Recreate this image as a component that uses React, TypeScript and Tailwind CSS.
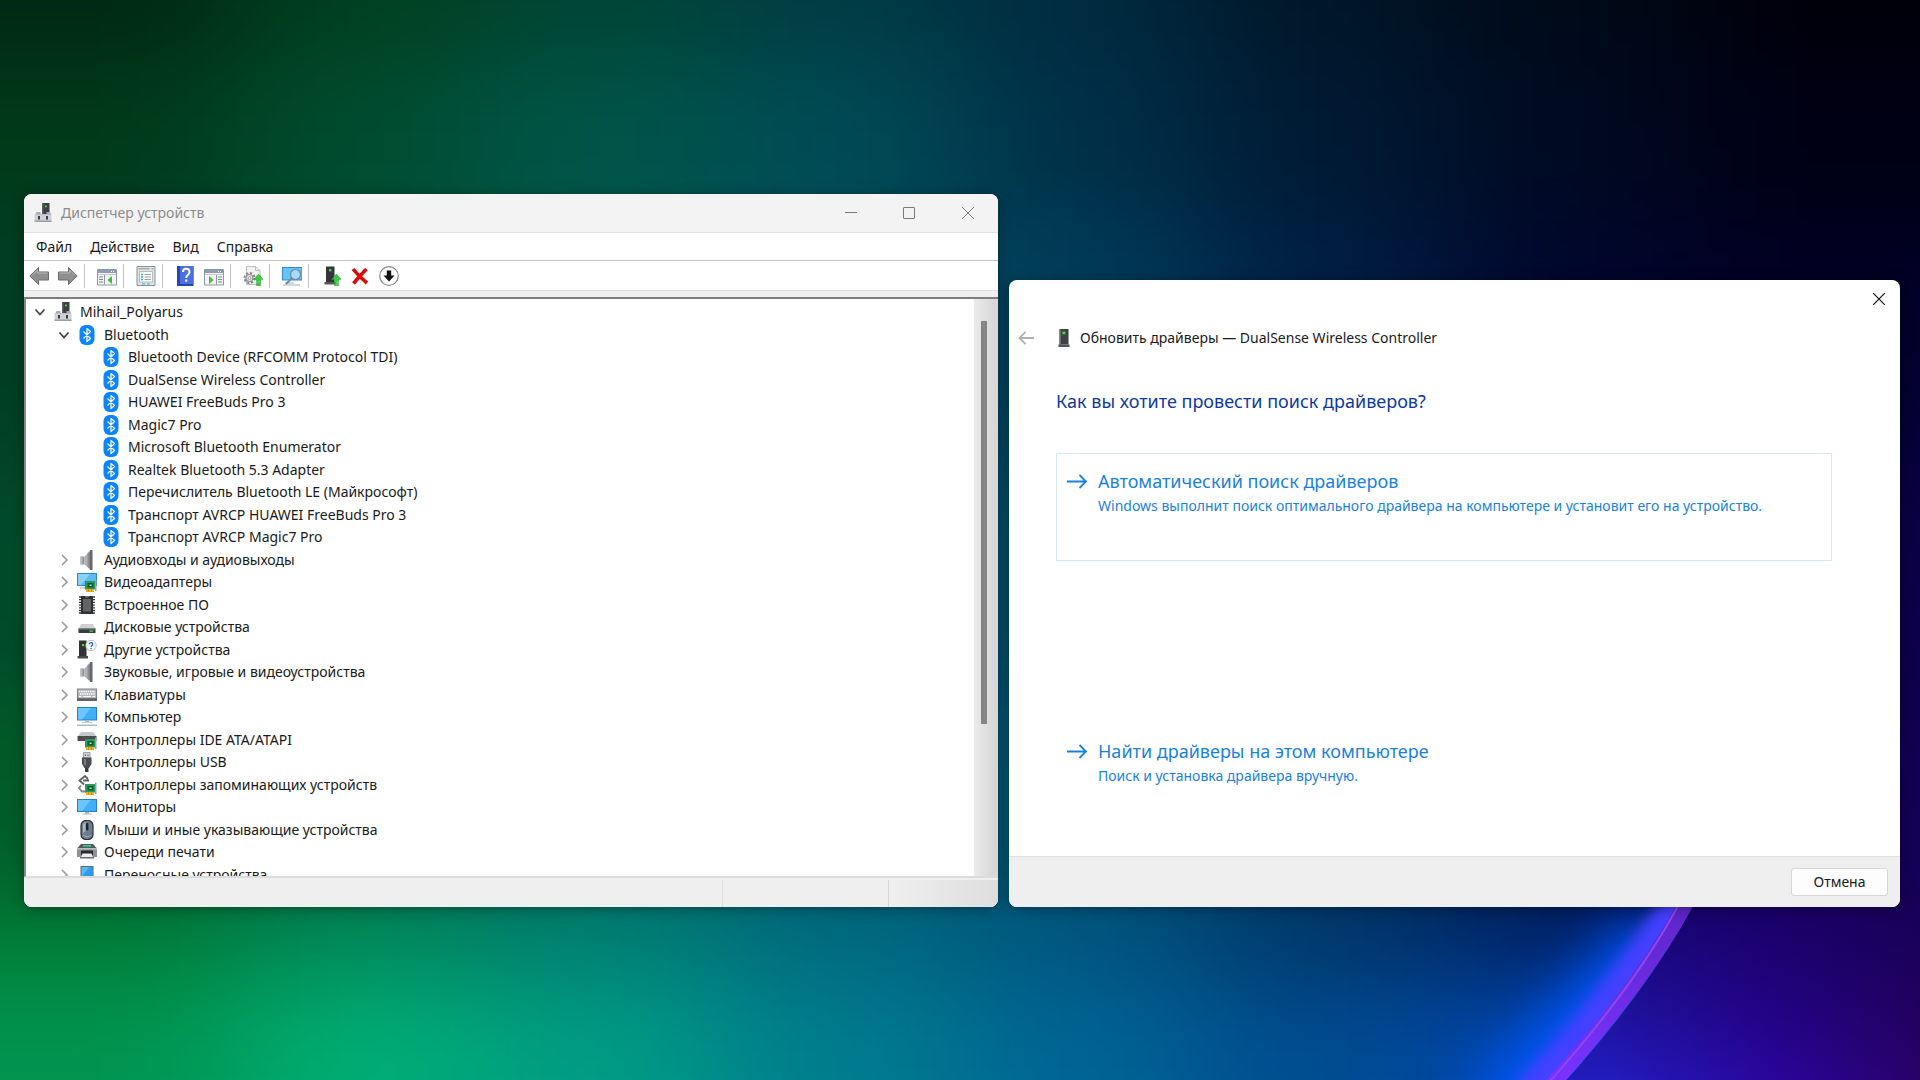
import React from 'react';

type IconName =
  | 'computerRoot'
  | 'bluetooth'
  | 'speaker'
  | 'display'
  | 'chip'
  | 'disk'
  | 'unknown'
  | 'keyboard'
  | 'computer'
  | 'ide'
  | 'usb'
  | 'storage'
  | 'monitor'
  | 'mouse'
  | 'printer'
  | 'portable';

type Node = { label: string; icon: IconName; depth: 0 | 1 | 2; open?: boolean };

const nodes: Node[] = [
  { label: 'Mihail_Polyarus', icon: 'computerRoot', depth: 0, open: true },
  { label: 'Bluetooth', icon: 'bluetooth', depth: 1, open: true },
  { label: 'Bluetooth Device (RFCOMM Protocol TDI)', icon: 'bluetooth', depth: 2 },
  { label: 'DualSense Wireless Controller', icon: 'bluetooth', depth: 2 },
  { label: 'HUAWEI FreeBuds Pro 3', icon: 'bluetooth', depth: 2 },
  { label: 'Magic7 Pro', icon: 'bluetooth', depth: 2 },
  { label: 'Microsoft Bluetooth Enumerator', icon: 'bluetooth', depth: 2 },
  { label: 'Realtek Bluetooth 5.3 Adapter', icon: 'bluetooth', depth: 2 },
  { label: 'Перечислитель Bluetooth LE (Майкрософт)', icon: 'bluetooth', depth: 2 },
  { label: 'Транспорт AVRCP HUAWEI FreeBuds Pro 3', icon: 'bluetooth', depth: 2 },
  { label: 'Транспорт AVRCP Magic7 Pro', icon: 'bluetooth', depth: 2 },
  { label: 'Аудиовходы и аудиовыходы', icon: 'speaker', depth: 1 },
  { label: 'Видеоадаптеры', icon: 'display', depth: 1 },
  { label: 'Встроенное ПО', icon: 'chip', depth: 1 },
  { label: 'Дисковые устройства', icon: 'disk', depth: 1 },
  { label: 'Другие устройства', icon: 'unknown', depth: 1 },
  { label: 'Звуковые, игровые и видеоустройства', icon: 'speaker', depth: 1 },
  { label: 'Клавиатуры', icon: 'keyboard', depth: 1 },
  { label: 'Компьютер', icon: 'computer', depth: 1 },
  { label: 'Контроллеры IDE ATA/ATAPI', icon: 'ide', depth: 1 },
  { label: 'Контроллеры USB', icon: 'usb', depth: 1 },
  { label: 'Контроллеры запоминающих устройств', icon: 'storage', depth: 1 },
  { label: 'Мониторы', icon: 'monitor', depth: 1 },
  { label: 'Мыши и иные указывающие устройства', icon: 'mouse', depth: 1 },
  { label: 'Очереди печати', icon: 'printer', depth: 1 },
  { label: 'Переносные устройства', icon: 'portable', depth: 1 },
];

const indent = { 0: 'pl-[5px]', 1: 'pl-[29px]', 2: 'pl-[53px]' };

// Green expansion card with gold pins, shared by the adapter icons
const Card = () => (
  <g>
    <path d="M8 9h10v8.500h-10z" fill="#2a9a5a" />
    <path d="M18 7.500h1.500v11.500h-1.500z" fill="#9aa3a8" />
    <path d="M10.500 11h6v4.500h-6z" fill="#0b5a30" />
    <path d="M12.500 12.500h2v1.500h-2z" fill="#a5f0c2" />
    <path d="M9 17h8v3H9z" fill="#f5ad1e" />
    <path d="M11.500 17v3M14.500 17v3" stroke="#b87908" strokeWidth=".6" />
  </g>
);

const glyphs: Record<IconName, React.ReactNode> = {
  computerRoot: (
    <>
      <path d="M9 0h7.500v11H9z" fill="#3d3f42" />
      <path d="M9 0h1.500v11H9z" fill="#5c5f63" />
      <rect x="12" y="2.500" width="1.800" height="1.800" fill="#3dea3d" />
      <path d="M3.500 9h4v2h6V9h3.500l1.500 3H2z" fill="#a9abb0" />
      <path d="M1.500 11.500h17V19h-17z" fill="#cfd1d6" />
      <path d="M1.500 17.500h17V19h-17z" fill="#9d9fa6" />
      <path d="M5 13h2v3.500H5zM13 13h2v3.500h-2z" fill="#3b3d42" />
    </>
  ),
  bluetooth: (
    <>
      <rect x="2.500" y="0" width="15" height="20" rx="6" fill="#0a84ff" />
      <path d="M6.500 6.500l7 7L10 16.500V3.500l3.500 3-7 7" fill="none" stroke="#fff" strokeWidth="1.200" strokeLinejoin="round" />
    </>
  ),
  speaker: (
    <>
      <path d="M3.500 6.500h4v8h-4z" fill="#8d9095" />
      <path d="M3.500 6.500h2v8h-2z" fill="#b9bcc0" />
      <path d="M7.500 6.500L13 1v18l-5.500-4.500z" fill="#b0b3b8" />
      <path d="M10.500 3.500L13 1v18l-2.500-2z" fill="#888b90" />
      <path d="M13 0h2.500v20H13z" fill="#62666b" />
    </>
  ),
  display: (
    <>
      <path d="M0 1h20v13H0z" fill="#2f86c6" />
      <path d="M1 2h18v11H1z" fill="#5cbcf2" />
      <path d="M1 2h12L4 13H1z" fill="#86d2fa" />
      <path d="M3 15.500h6v1H3z" fill="#a3abb3" />
      <Card />
    </>
  ),
  chip: (
    <>
      <path d="M2 2h16M2 4.700h16M2 7.400h16M2 10.100h16M2 12.800h16M2 15.500h16M2 18h16" stroke="#3a3a3a" strokeWidth="1.300" />
      <path d="M4 1h3.500a2.500 2 0 0 0 5 0H16v18H4z" fill="#2e2f31" />
      <path d="M6 4h8v12.500H6z" fill="#626467" />
    </>
  ),
  disk: (
    <>
      <path d="M4 7h12l2.500 5h-17z" fill="#cfd1d3" />
      <path d="M1.500 11.500h17V16h-17z" fill="#3a3c3f" />
      <path d="M1.500 11.500h17v1h-17z" fill="#77797c" />
      <rect x="12.500" y="13.300" width="3.500" height="1.500" fill="#35d24c" />
    </>
  ),
  unknown: (
    <>
      <path d="M2 .500h7.500V16H2z" fill="#313336" />
      <path d="M.5 16h10.500v2.500H.5z" fill="#47494c" />
      <rect x="5" y="4" width="2.200" height="2.200" fill="#35e046" />
      <circle cx="14" cy="5.500" r="5.200" fill="#f6f7f8" stroke="#aab0b6" strokeWidth=".8" />
      <path d="M12.300 4.200c0-2.200 3.500-2.200 3.500 0 0 1.300-1.700 1.300-1.700 2.700M14.100 8v1.200" fill="none" stroke="#1d6fc4" strokeWidth="1.300" />
    </>
  ),
  keyboard: (
    <>
      <path d="M0 3.500h20v12.500H0z" fill="#7f8388" />
      <path d="M1 4.500h18v8.500H1z" fill="#b6babf" />
      <path d="M2 6.500h16M3 9h15" stroke="#fff" strokeWidth="1.300" strokeDasharray="1.400 .8" />
      <path d="M2 11.500h2.500M6 11.500h8M15.500 11.500h2.500" stroke="#fff" strokeWidth="1.200" />
      <path d="M0 13.500h20V16H0z" fill="#5f6368" />
    </>
  ),
  computer: (
    <>
      <path d="M0 0h20v13.500H0z" fill="#2a7fc0" />
      <path d="M1 1h18v11.500H1z" fill="#3fb0f5" />
      <path d="M1 1h13L5 12.500H1z" fill="#6cc6fa" />
      <path d="M8 13.500h4V15H8z" fill="#a9bccb" />
      <path d="M5 15h10v1H5z" fill="#c3ced8" />
      <path d="M0 17.500h20V19H0z" fill="#a9bccb" />
    </>
  ),
  ide: (
    <>
      <path d="M4 2h12l3.500 4.500H.5z" fill="#c6c8ca" />
      <path d="M.5 6h19v5H.5z" fill="#4a4c4f" />
      <Card />
    </>
  ),
  usb: (
    <>
      <path d="M6.500.500h6.500V6H6.500z" fill="#d5d7da" stroke="#8c8f93" strokeWidth=".8" />
      <path d="M8 2.500h1v1.500H8zM10.500 2.500h1v1.500h-1z" fill="#55585b" />
      <path d="M5 5.500h9.500V12l-2.500 4H7.500L5 12z" fill="#4b4d50" />
      <path d="M7 7h2v6H7z" fill="#7a7c7f" />
      <path d="M8 16h3.500v4H8z" fill="#3a3c3e" />
    </>
  ),
  storage: (
    <>
      <path d="M11 4L8 1 2.500 5.500 7 9.500M6 5.500h6" fill="none" stroke="#5b5e61" strokeWidth="1.800" />
      <path d="M4 10.500L2 13l3 3.500h4" fill="none" stroke="#808386" strokeWidth="1.800" />
      <Card />
    </>
  ),
  monitor: (
    <>
      <path d="M0 2h20v13H0z" fill="#2a7fc0" />
      <path d="M1 3h18v11H1z" fill="#3fb0f5" />
      <path d="M1 3h13L5 14H1z" fill="#6cc6fa" />
      <path d="M8 15h4v1.500H8zM5.500 16.500h9v1h-9z" fill="#a9bccb" />
    </>
  ),
  mouse: (
    <>
      <rect x="4" y=".5" width="12" height="19" rx="5" fill="#6d7d8e" stroke="#2b2f34" strokeWidth="1.200" />
      <path d="M6 5.500C6 3 7.500 2 8.500 2v9L6 13z" fill="#a7b6c5" />
      <rect x="9" y="3" width="2.400" height="7.500" rx="1" fill="#1f2226" />
      <path d="M6 15c2 2 6 2 8 0" fill="none" stroke="#9aabbc" />
    </>
  ),
  printer: (
    <>
      <path d="M4 2h12l3.500 4H.5z" fill="#54575a" />
      <path d="M6 3h8v1.700H6z" fill="#29cf8a" />
      <path d="M0 6h20v9H0z" fill="#8e9296" />
      <path d="M0 6h20v1.500H0z" fill="#b9bcc0" />
      <path d="M4 8.500h12v5H4z" fill="#26282a" />
      <path d="M5.500 11.500h9l1.500 4H4z" fill="#eceef0" />
      <path d="M3 15h14v1.500H3z" fill="#686b6f" />
    </>
  ),
  portable: (
    <>
      <path d="M3.500 1h13v19h-13z" fill="#5f666d" />
      <path d="M4.500 2h11v15h-11z" fill="#2c9cf0" />
      <path d="M4.500 2h8l-8 10z" fill="#58b6f8" />
    </>
  ),
};

function DeviceIcon({ name }: { name: IconName }) {
  return (
    <svg viewBox="0 0 20 20" className="h-5 w-[22px] shrink-0" aria-hidden="true">
      {glyphs[name]}
    </svg>
  );
}

function Chevron({ open }: { open?: boolean }) {
  return (
    <svg viewBox="0 0 18 18" className="h-[18px] w-[18px]" fill="none" aria-hidden="true">
      {open ? (
        <path d="M4.500 6.500L9 11.500l4.500-5" stroke="#404040" strokeWidth="1.700" />
      ) : (
        <path d="M7 4l5 5-5 5" stroke="#9b9b9b" strokeWidth="1.600" />
      )}
    </svg>
  );
}

const ArrowUpGreen = () => (
  <path d="M15.500 8l5 5.500h-2.800v2h-4.400v-2h-2.800zM13.300 16.500h4.400v1.200h-4.400zM13.300 18.600h4.400v1.200h-4.400z" fill="#3ac93f" stroke="#1d9a28" strokeWidth=".4" />
);

const PaneWindow = ({ flip }: { flip?: boolean }) => (
  <>
    <path d="M.5 3.500h19v15.500H.5z" fill="#f4f4f4" stroke="#8d97a3" />
    <path d="M1 4h18v3H1z" fill="#8f9db0" />
    <path d="M14 5.500h1M16 5.500h1" stroke="#fff" />
    <path d="M1 8.500h18" stroke="#c4c9d0" />
    {flip ? (
      <>
        <path d="M12.500 9v9.500" stroke="#8d97a3" />
        <path d="M14 11h4M14 13.500h4M14 16h4" stroke="#7d8692" strokeWidth="1.200" />
        <path d="M5 10l4.500 4L5 18z" fill="#3bbf30" />
      </>
    ) : (
      <>
        <path d="M7.500 9v9.500" stroke="#8d97a3" />
        <path d="M2 11h4M2 13.500h4M2 16h4" stroke="#7d8692" strokeWidth="1.200" />
        <path d="M15 10l-4.500 4 4.500 4z" fill="#3bbf30" />
      </>
    )}
  </>
);

const toolGroups: { label: string; art: React.ReactNode }[][] = [
  [
    {
      label: 'Назад',
      art: (
        <>
          <path d="M.8 10L9.500 1.500V6h10v8h-10v4.500z" fill="#8f8f8f" stroke="#6b6b6b" />
          <path d="M3 9.500L8.500 4v3h10" fill="none" stroke="#b9b9b9" />
        </>
      ),
    },
    {
      label: 'Вперёд',
      art: (
        <>
          <path d="M19.200 10L10.500 1.500V6H.5v8h10v4.500z" fill="#8f8f8f" stroke="#6b6b6b" />
          <path d="M17 9.500L11.500 4v3h-10" fill="none" stroke="#b9b9b9" />
        </>
      ),
    },
  ],
  [{ label: 'Дерево консоли', art: <PaneWindow /> }],
  [
    {
      label: 'Свойства',
      art: (
        <>
          <path d="M1 .500h18V19.500H1z" fill="#e1e4e7" stroke="#8b9096" />
          <path d="M2.500 2.800h11M15.500 2.800h2" stroke="#8b9096" />
          <path d="M3.500 5.500h13v10.500h-13z" fill="#fff" stroke="#a5abb2" strokeWidth=".8" />
          <path d="M5 8.500h2M5 11h2M5 13.500h2" stroke="#37a3e6" strokeWidth="1.300" />
          <path d="M8.500 8.500h6.500M8.500 11h6.500M8.500 13.500h6.500" stroke="#9aa0a6" />
          <path d="M6 17.800h3M11 17.800h3" stroke="#41c0ee" strokeWidth="1.200" />
        </>
      ),
    },
  ],
  [
    {
      label: 'Справка',
      art: (
        <>
          <path d="M2 0h16.500v20H2z" fill="#2447b5" />
          <path d="M5 0h13.500v18H5z" fill="#4a6fe0" />
          <path d="M8 6c0-4.500 6.500-4.500 6.500 0 0 3-3.300 2.500-3.300 6M11.200 13.500v2.200" fill="none" stroke="#fff" strokeWidth="2" />
        </>
      ),
    },
    { label: 'Панель действий', art: <PaneWindow flip /> },
  ],
  [
    {
      label: 'Обновить конфигурацию',
      art: (
        <>
          <path d="M3.500.500h9l4.500 4V18.500h-13.500z" fill="#f3f3f3" stroke="#bcbcbc" />
          <path d="M12.500.500v4H17" fill="none" stroke="#bcbcbc" />
          <circle cx="6.500" cy="12" r="5" fill="none" stroke="#858585" strokeWidth="2" strokeDasharray="2.200 1.700" />
          <circle cx="6.500" cy="12" r="3.600" fill="#dcdcdc" stroke="#858585" />
          <circle cx="6.500" cy="12" r="1.400" fill="#fff" stroke="#858585" strokeWidth=".6" />
          <ArrowUpGreen />
        </>
      ),
    },
  ],
  [
    {
      label: 'Сканировать',
      art: (
        <>
          <path d="M0 1h20v13.500H0z" fill="#2f8ccc" />
          <path d="M1 2h18.500v11.500H1z" fill="#67c3f3" />
          <path d="M3 17h9M1 19h17" stroke="#9fb3c3" strokeWidth="1.200" />
          <path d="M10 12l-6 6" stroke="#6e8ba5" strokeWidth="2" />
          <circle cx="13.500" cy="8.500" r="5" fill="#a6dcf8" stroke="#6e8ba5" strokeWidth="1.200" />
        </>
      ),
    },
  ],
  [
    {
      label: 'Обновить драйвер',
      art: (
        <>
          <path d="M5 .500h8.500V16H5z" fill="#333538" />
          <path d="M3.500 16h11.500v2.500H3.500z" fill="#55585b" />
          <rect x="8" y="3" width="2.400" height="2.400" fill="#2fe23c" />
          <ArrowUpGreen />
        </>
      ),
    },
    {
      label: 'Удалить устройство',
      art: <path d="M3 3C7 8 12 13 17 17M16.500 3C12 7.500 8 12 3.500 17.500" fill="none" stroke="#dc0a0a" strokeWidth="3.600" />,
    },
    {
      label: 'Отключить устройство',
      art: (
        <>
          <circle cx="10" cy="10" r="9.300" fill="#fff" stroke="#8a8a8a" strokeWidth="1.200" />
          <path d="M7.800 4.500h4.400V9.500h3.300L10 15.500 4.500 9.500h3.300z" fill="#111" />
        </>
      ),
    },
  ],
];

// Blurred colour field of the desktop, one row per band from top to bottom
const bands = [
  { y: 0, h: 60, colors: ['#002812', '#00401f', '#004535', '#003c44', '#002a40', '#001628', '#000a18', '#00000a'] },
  { y: 60, h: 160, colors: ['#003a1a', '#004c30', '#005548', '#004a55', '#003048', '#001a34', '#000a22', '#000014'] },
  { y: 220, h: 240, colors: ['#003e24', '#005236', '#005a50', '#005060', '#003c5a', '#001f45', '#00062e', '#020024'] },
  { y: 460, h: 240, colors: ['#004a2a', '#005a3c', '#006050', '#005864', '#004a6e', '#003058', '#001048', '#06003a'] },
  { y: 700, h: 200, colors: ['#005c28', '#006a44', '#006c60', '#006070', '#005274', '#003560', '#001450', '#0e004c'] },
  { y: 900, h: 90, colors: ['#008038', '#008c5c', '#008074', '#006a80', '#005580', '#00386c', '#00266a', '#0e0060'] },
  { y: 990, h: 90, colors: ['#009450', '#00ae74', '#009c84', '#007c8e', '#006494', '#004c90', '#0044b0', '#200890'] },
];

function Wallpaper() {
  return (
    <svg viewBox="0 0 1920 1080" preserveAspectRatio="none" className="absolute inset-0 h-full w-full" aria-hidden="true">
      <defs>
        <filter id="soft" x="-20%" y="-20%" width="140%" height="140%" colorInterpolationFilters="sRGB">
          <feGaussianBlur stdDeviation="75 45" />
        </filter>
        <filter id="glow" x="-50%" y="-50%" width="200%" height="200%" colorInterpolationFilters="sRGB">
          <feGaussianBlur stdDeviation="28" />
        </filter>
        <filter id="edge" x="-50%" y="-50%" width="200%" height="200%" colorInterpolationFilters="sRGB">
          <feGaussianBlur stdDeviation="7" />
        </filter>
        <linearGradient id="beyond" gradientUnits="userSpaceOnUse" x1="1600" y1="1040" x2="1930" y2="960">
          <stop offset="0" stopColor="#221bbd" />
          <stop offset=".5" stopColor="#2a0498" />
          <stop offset="1" stopColor="#28005c" />
        </linearGradient>
        <linearGradient id="beyondShade" gradientUnits="userSpaceOnUse" x1="0" y1="400" x2="0" y2="1080">
          <stop offset="0" stopColor="#06003a" />
          <stop offset=".7" stopColor="#100056" stopOpacity=".85" />
          <stop offset="1" stopColor="#100056" stopOpacity="0" />
        </linearGradient>
        <linearGradient id="fade" gradientUnits="userSpaceOnUse" x1="0" y1="240" x2="0" y2="520">
          <stop offset="0" stopColor="#fff" stopOpacity="0" />
          <stop offset="1" stopColor="#fff" />
        </linearGradient>
        <mask id="fadeMask" maskUnits="userSpaceOnUse" x="0" y="0" width="1920" height="1080">
          <rect width="1920" height="1080" fill="url(#fade)" />
        </mask>
        <linearGradient id="rim" gradientUnits="userSpaceOnUse" x1="0" y1="880" x2="0" y2="1080">
          <stop offset="0" stopColor="#5a24c0" />
          <stop offset="1" stopColor="#7a32ff" />
        </linearGradient>
        <clipPath id="inside">
          <path d="M0 880H1706Q1662 975 1550 1098H0z" />
        </clipPath>
      </defs>
      <g filter="url(#soft)">
        {bands.map((band, row) =>
          band.colors.map((color, col) => {
            const top = row === 0 ? -200 : band.y;
            const bottom = row === bands.length - 1 ? 1280 : band.y + band.h;
            const left = col === 0 ? -200 : col * 240;
            const right = col === 7 ? 2120 : (col + 1) * 240;
            return <rect key={`${row}-${col}`} x={left} y={top} width={right - left + 1} height={bottom - top + 1} fill={color} />;
          }),
        )}
      </g>
      <g mask="url(#fadeMask)">
        <path d="M1706 880L1890 240H1920V1080H1567Q1662 975 1706 880z" fill="url(#beyond)" />
        <path d="M1706 880L1890 240H1920V1080H1567Q1662 975 1706 880z" fill="url(#beyondShade)" />
      </g>
      <g clipPath="url(#inside)">
        <path d="M1670 940Q1600 1030 1500 1130" fill="none" stroke="#0058ff" strokeWidth="90" filter="url(#glow)" />
        <path d="M1690 880Q1640 975 1526 1098" fill="none" stroke="#4440ff" strokeWidth="34" filter="url(#edge)" />
        <path d="M1706 880Q1662 975 1550 1098" fill="none" stroke="url(#rim)" strokeWidth="30" />
        <path d="M1691 880Q1647 975 1535 1098" fill="none" stroke="#8a48f0" strokeWidth="2" />
      </g>
    </svg>
  );
}

function DeviceManager() {
  return (
    <section className="relative min-w-0 flex-[974_1_0%] overflow-hidden rounded-lg bg-white shadow-[0_2px_14px_rgba(0,0,0,0.35)]">
      <header className="flex h-[39px] items-center border-b border-[#e2e2e2] bg-[#f3f3f3] pl-2">
        <DeviceIcon name="computerRoot" />
        <h1 className="ml-[7px] flex-1 text-sm text-[#8c8c8c]">Диспетчер устройств</h1>
        <div className="flex h-full text-[#7a7a7a]">
          <button aria-label="Свернуть" className="flex w-[58px] items-center justify-center">
            <svg viewBox="0 0 12 12" className="h-3 w-3" fill="none" stroke="currentColor"><path d="M0 5.500h12" /></svg>
          </button>
          <button aria-label="Развернуть" className="flex w-[58px] items-center justify-center">
            <svg viewBox="0 0 12 12" className="h-3 w-3" fill="none" stroke="currentColor"><rect x=".5" y=".5" width="11" height="11" rx=".5" /></svg>
          </button>
          <button aria-label="Закрыть" className="flex w-[60px] items-center justify-center">
            <svg viewBox="0 0 12 12" className="h-3 w-3" fill="none" stroke="currentColor"><path d="M0 0l12 12M12 0L0 12" /></svg>
          </button>
        </div>
      </header>

      <nav className="flex h-7 items-center gap-[18px] border-b border-[#c4c4c4] pl-3 text-sm text-[#1a1a1a]">
        {['Файл', 'Действие', 'Вид', 'Справка'].map((item) => (
          <button key={item}>{item}</button>
        ))}
      </nav>

      <div className="flex h-[30px] items-center border-b border-[#dedede]">
        {toolGroups.map((group, idx) => (
          <React.Fragment key={idx}>
            {idx > 0 && <span className="mr-[7px] ml-[2px] h-6 w-px bg-[#c2c2c2]" />}
            {group.map((tool) => (
              <button key={tool.label} aria-label={tool.label} className="flex w-[29px] justify-center">
                <svg viewBox="0 0 20 20" className="h-5 w-5" aria-hidden="true">{tool.art}</svg>
              </button>
            ))}
          </React.Fragment>
        ))}
      </div>

      <div className="bg-[#efefef] pt-[6px]">
        <div className="flex h-[580px] border-t-2 border-b border-l-2 border-t-[#7d7d7d] border-b-[#dcdcdc] border-l-[#8a8a8a] bg-white">
          <ul role="tree" className="grid min-w-0 flex-1 auto-rows-[22px_23px] content-start overflow-hidden pt-[2px] text-sm text-[#1a1a1a]">
            {nodes.map((node) => (
              <li
                key={node.label}
                role="treeitem"
                aria-expanded={node.depth < 2 ? Boolean(node.open) : undefined}
                className={`flex items-center ${indent[node.depth]}`}
              >
                <span className="mr-[3px] flex w-[18px] shrink-0">
                  {node.depth < 2 && (
                    <button aria-label={node.open ? 'Свернуть ветвь' : 'Развернуть ветвь'}>
                      <Chevron open={node.open} />
                    </button>
                  )}
                </span>
                <DeviceIcon name={node.icon} />
                <span className="ml-[6px] leading-5 whitespace-nowrap">{node.label}</span>
              </li>
            ))}
          </ul>
          <div className="flex w-6 shrink-0 border-r-2 border-[#dadada] bg-linear-to-r from-[#ebebeb] to-[#d6d6d6] pt-[22px] pl-[7px]">
            <div className="h-[403px] w-[6px] bg-[#858585]" />
          </div>
        </div>
      </div>

      <footer className="flex h-[30px] border-t border-[#dcdcdc] bg-[#efefef] pt-[2px]">
        <div className="flex-1" />
        <div className="w-[166px] border-l border-[#dcdcdc]" />
        <div className="w-[110px] border-l border-[#d4d4d4] bg-linear-to-r from-[#efefef] to-[#dedede]" />
      </footer>
    </section>
  );
}

function CommandLink({ title, text, focused }: { title: string; text: string; focused?: boolean }) {
  return (
    <button
      className={`flex h-[108px] w-full items-start gap-[11px] border pt-[14px] pl-[10px] text-left ${
        focused ? 'border-[#d3e7f8]' : 'border-transparent'
      }`}
    >
      <svg viewBox="0 0 20 26" className="h-[26px] w-5 shrink-0" fill="none" stroke="#1a82dc" strokeWidth="1.800" aria-hidden="true">
        <path d="M0 13.500h19M12.500 7l6.500 6.500-6.500 6.500" />
      </svg>
      <span className="flex flex-col gap-[2px] text-[#1a82dc]">
        <span className="text-lg leading-[26px]">{title}</span>
        <span className="text-sm leading-5">{text}</span>
      </span>
    </button>
  );
}

function UpdateDrivers() {
  return (
    <section className="relative flex min-w-0 flex-[891_1_0%] flex-col overflow-hidden rounded-lg bg-white shadow-[0_2px_14px_rgba(0,0,0,0.35)]">
      <button aria-label="Закрыть" className="flex h-[38px] w-[42px] items-center justify-center self-end">
        <svg viewBox="0 0 12 12" className="h-3 w-3" fill="none" stroke="#111" strokeWidth="1.200"><path d="M0 0l12 12M12 0L0 12" /></svg>
      </button>
      <div className="flex h-10 items-center pl-[9px]">
        <button aria-label="Назад" disabled>
          <svg viewBox="0 0 16 16" className="h-4 w-4" fill="none" stroke="#b0b0b0" strokeWidth="1.800"><path d="M16 8H1.500M7.500 1.800L1.500 8l6 6.200" /></svg>
        </button>
        <svg viewBox="0 0 20 20" className="ml-5 h-5 w-5" aria-hidden="true">
          <path d="M5.500 1h9v15.500h-9z" fill="#3f4144" />
          <path d="M5.500 1h1.500v15.500H5.500z" fill="#6b6e72" />
          <path d="M4.500 16.500h11V19h-11z" fill="#4f5255" />
          <rect x="8.500" y="3.500" width="2.800" height="2.800" fill="#36e93c" />
        </svg>
        <h2 className="ml-[6px] text-sm text-[#1a1a1a]">Обновить драйверы — DualSense Wireless Controller</h2>
      </div>

      <div className="pt-[27px] pr-[68px] pb-[25px] pl-[47px]">
        <p className="mb-9 text-lg leading-8 text-[#0d3a9e]">Как вы хотите провести поиск драйверов?</p>
        <CommandLink
          focused
          title="Автоматический поиск драйверов"
          text="Windows выполнит поиск оптимального драйвера на компьютере и установит его на устройство."
        />
        <div className="mt-[162px]">
          <CommandLink title="Найти драйверы на этом компьютере" text="Поиск и установка драйвера вручную." />
        </div>
      </div>

      <footer className="flex h-[51px] items-center justify-end border-t border-[#e2e2e2] bg-[#efefef] pr-3">
        <button className="h-7 w-[97px] rounded-[3px] border border-[#d6d6d6] bg-[#fdfdfd] text-sm text-[#1a1a1a]">Отмена</button>
      </footer>
    </section>
  );
}

export default function App() {
  return (
    <main className="relative flex min-h-screen items-end gap-[11px] overflow-hidden bg-[#00243c] pr-5 pb-[173px] pl-6 font-['Noto_Sans',sans-serif]">
      <Wallpaper />
      <DeviceManager />
      <UpdateDrivers />
    </main>
  );
}
